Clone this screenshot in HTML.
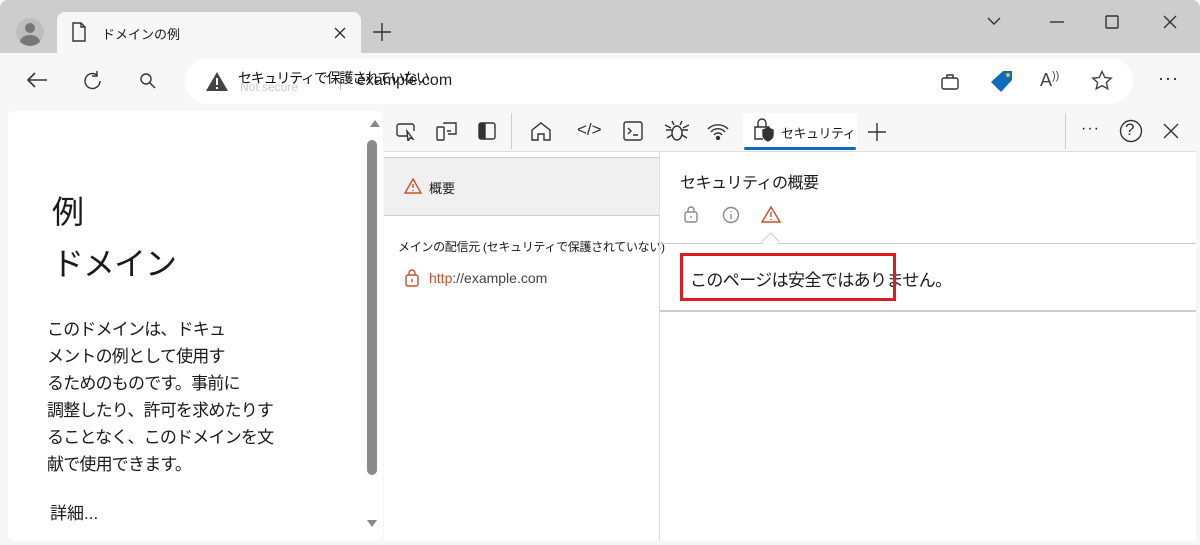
<!DOCTYPE html><html><head><meta charset="utf-8"><style>
*{margin:0;padding:0;box-sizing:border-box}
body{width:1200px;height:545px;overflow:hidden;background:#f7f7f7;font-family:"Liberation Sans","Noto Sans CJK JP",sans-serif;position:relative;color:#1a1a1a}
.a{position:absolute}
svg{position:absolute;fill:none;stroke:#333;stroke-width:1.4}
</style></head><body>
<div class="a" style="left:0;top:0;width:1200px;height:53px;background:#cdcdcd;border-radius:8px 8px 0 0"></div>
<div class="a" style="left:16px;top:18px;width:28px;height:28px;border-radius:50%;background:#bdbdbd;overflow:hidden"><div class="a" style="left:9px;top:5px;width:10px;height:10px;border-radius:50%;background:#777"></div><div class="a" style="left:4px;top:17px;width:20px;height:14px;border-radius:50%;background:#777"></div></div>
<div class="a" style="left:57px;top:12px;width:304px;height:42px;background:#f7f7f7;border-radius:8px 8px 0 0"></div>
<svg style="left:72px;top:22px" width="14" height="20"><path d="M1 1h8l4 4v14H1z M9 1v4h4"/></svg>
<div class="a" style="left:102px;top:24px;font-size:13px">ドメインの例</div>
<svg style="left:334px;top:27px" width="12" height="12"><path d="M1 1l10 10M11 1L1 11"/></svg>
<svg style="left:372px;top:22px" width="20" height="20"><path d="M10 1v18M1 10h18"/></svg>
<svg style="left:987px;top:16px" width="14" height="10"><path d="M1 2l6 6 6-6"/></svg>
<svg style="left:1050px;top:20px" width="14" height="4"><path d="M0 2h14"/></svg>
<svg style="left:1105px;top:15px" width="14" height="14"><rect x="1" y="1" width="12" height="12" rx="1"/></svg>
<svg style="left:1163px;top:15px" width="14" height="14"><path d="M1 1l12 12M13 1L1 13"/></svg>
<svg style="left:26px;top:71px;stroke-width:1.6" width="22" height="18"><path d="M21 9H2M9 2L2 9l7 7"/></svg>
<svg style="left:82px;top:70px" width="22" height="22"><path d="M18 11a7.5 7.5 0 1 1-3-6M15 1v5h-5"/></svg>
<svg style="left:139px;top:72px" width="18" height="18"><circle cx="7" cy="7" r="5"/><path d="M11 11l5 5"/></svg>
<div class="a" style="left:185px;top:58px;width:948px;height:46px;background:#fff;border-radius:23px"></div>
<svg style="left:206px;top:72px;fill:#444;stroke:none" width="22" height="20"><path d="M11 0L22 19H0z"/><rect x="10" y="6" width="2" height="7" fill="#fff"/><rect x="10" y="15" width="2" height="2" fill="#fff"/></svg>
<div class="a" style="left:240px;top:80px;font-size:12px;color:#ccc">Not secure</div>
<div class="a" style="left:340px;top:72px;width:1px;height:18px;background:#bbb"></div>
<div class="a" style="left:357px;top:72px;font-size:16px;color:#222">example.com</div>
<div class="a" style="left:238px;top:68px;font-size:14px;color:#111;letter-spacing:-1.2px">セキュリティで保護されていない</div>
<svg style="left:941px;top:74px" width="18" height="16"><rect x="1" y="4" width="16" height="11" rx="2"/><path d="M6 4V1h6v3"/></svg>
<svg style="left:990px;top:70px;stroke:none;fill:#0f6cbd" width="24" height="24"><path d="M13 1h9v9L11 22 1 12z"/><circle cx="18" cy="5" r="2" fill="#f2c21b"/></svg>
<div class="a" style="left:1040px;top:70px;font-size:18px;color:#444">A<span style="font-size:11px;vertical-align:top">))</span></div>
<svg style="left:1091px;top:70px;stroke:#444" width="22" height="22"><path d="M11 1.5l2.8 6 6.4.7-4.8 4.3 1.4 6.4L11 15.6 5.2 18.9l1.4-6.4L1.8 8.2l6.4-.7z"/></svg>
<div class="a" style="left:1158px;top:68px;font-size:18px;letter-spacing:1px">···</div>
<!-- page -->
<div class="a" style="left:8px;top:111px;width:375px;height:430px;background:#fff;border-radius:6px"></div>
<div class="a" style="left:370px;top:120px;border:5px solid transparent;border-bottom:7px solid #888;border-top:0"></div>
<div class="a" style="left:367px;top:140px;width:10px;height:335px;background:#8a8a8a;border-radius:5px"></div>
<div class="a" style="left:367px;top:520px;border:5px solid transparent;border-top:7px solid #888;border-bottom:0"></div>
<div class="a" style="left:52px;top:186px;font-size:32px;line-height:52px;letter-spacing:-1px">例<br>ドメイン</div>
<div class="a" style="left:47px;top:316px;font-size:17px;line-height:27px;width:260px;letter-spacing:-0.8px">このドメインは、ドキュ<br>メントの例として使用す<br>るためのものです。事前に<br>調整したり、許可を求めたりす<br>ることなく、このドメインを文<br>献で使用できます。</div>
<div class="a" style="left:50px;top:499px;font-size:17px">詳細...</div>
<!-- devtools -->
<div class="a" style="left:384px;top:111px;width:812px;height:430px;background:#fff"></div>
<div class="a" style="left:384px;top:111px;width:812px;height:41px;background:#f7f7f7;border-bottom:1px solid #ddd"></div>
<svg style="left:396px;top:123px" width="20" height="18"><path d="M12 13H3a2 2 0 0 1-2-2V3a2 2 0 0 1 2-2h13a2 2 0 0 1 2 2v5M11 8l6 8-3-1-2 3z"/></svg>
<svg style="left:436px;top:121px" width="22" height="20"><rect x="1" y="6" width="7" height="13" rx="1"/><path d="M8 3V2h12v11h-8M11 10h4"/></svg>
<svg style="left:478px;top:122px" width="18" height="18"><rect x="1" y="1" width="16" height="16" rx="2"/><rect x="2" y="2" width="5" height="14" fill="#333"/></svg>
<div class="a" style="left:511px;top:113px;width:1px;height:36px;background:#ccc"></div>
<svg style="left:530px;top:121px" width="22" height="20"><path d="M2 9L11 2l9 7v10h-6v-6H8v6H2z"/></svg>
<div class="a" style="left:577px;top:120px;font-size:17px;color:#333">&lt;/&gt;</div>
<svg style="left:623px;top:121px" width="20" height="20"><rect x="1" y="1" width="18" height="18" rx="2"/><path d="M5 7l3 3-3 3M10 14h5"/></svg>
<svg style="left:664px;top:119px" width="26" height="24"><ellipse cx="13" cy="14" rx="5" ry="7"/><path d="M10 6l-2-4M16 6l2-4M8 11H2M8 16l-5 3M18 11h6M18 16l5 3M1 6l6 3M25 6l-6 3"/></svg>
<svg style="left:706px;top:122px" width="24" height="18"><path d="M2 7a14 14 0 0 1 20 0M5 10a9 9 0 0 1 14 0M8 13a5 5 0 0 1 8 0"/><circle cx="12" cy="16" r="1.5" fill="#333"/></svg>
<div class="a" style="left:743px;top:113px;width:114px;height:38px;background:#fff"></div>
<svg style="left:752px;top:118px" width="22" height="26"><path d="M11 21H3V9h14v3M6 9V5a4 4 0 0 1 8 0v4"/><path d="M11 12l5-2 5 2v5c0 4-5 6-5 6s-5-2-5-6z" fill="#333"/></svg>
<div class="a" style="left:781px;top:123px;font-size:13px;letter-spacing:-0.5px">セキュリティ</div>
<div class="a" style="left:744px;top:147px;width:112px;height:3px;background:#0f6cbd;border-radius:2px"></div>
<svg style="left:867px;top:122px" width="20" height="20"><path d="M10 1v18M1 10h18"/></svg>
<div class="a" style="left:1065px;top:113px;width:1px;height:36px;background:#ccc"></div>
<div class="a" style="left:1081px;top:120px;font-size:16px;letter-spacing:1px">···</div>
<svg style="left:1119px;top:119px" width="24" height="24"><circle cx="12" cy="12" r="10.5"/></svg>
<div class="a" style="left:1125px;top:120px;font-size:17px;color:#333">?</div>
<svg style="left:1163px;top:123px" width="16" height="16"><path d="M1 1l14 14M15 1L1 15"/></svg>
<div class="a" style="left:384px;top:157px;width:275px;height:59px;background:#f0f0f0;border-top:1px solid #ccc;border-bottom:1px solid #ccc"></div>
<svg style="left:404px;top:178px;stroke:#c8502a" width="18" height="16"><path d="M9 1L17 15H1z M9 6v4M9 12v1"/></svg>
<div class="a" style="left:429px;top:178px;font-size:13px">概要</div>
<div class="a" style="left:398px;top:238px;font-size:12px;letter-spacing:-0.3px">メインの配信元 (セキュリティで保護されていない)</div>
<svg style="left:405px;top:269px;stroke:#c8502a" width="14" height="18"><rect x="1" y="6" width="12" height="11" rx="2"/><path d="M4 6V4a3 3 0 0 1 6 0v2M7 10v3"/></svg>
<div class="a" style="left:429px;top:270px;font-size:14px;color:#c8502a">http<span style="color:#444">://example.com</span></div>
<div class="a" style="left:659px;top:152px;width:1px;height:389px;background:#dde"></div>
<div class="a" style="left:680px;top:169px;font-size:16px;letter-spacing:-0.5px">セキュリティの概要</div>
<svg style="left:684px;top:206px;stroke:#888" width="14" height="18"><rect x="1" y="6" width="12" height="10" rx="2"/><path d="M4 6V4a3 3 0 0 1 6 0v2M7 10v2"/></svg>
<svg style="left:722px;top:206px;stroke:#888" width="18" height="18"><circle cx="9" cy="9" r="7.5"/><path d="M9 8v5M9 5v1"/></svg>
<svg style="left:761px;top:206px;stroke:#c8502a" width="20" height="18"><path d="M10 1L19 16H1z M10 6v5M10 13v1"/></svg>
<div class="a" style="left:660px;top:243px;width:536px;height:1px;background:#ccc"></div>
<div class="a" style="left:764px;top:235px;width:13px;height:13px;background:#fff;border-left:1px solid #ccc;border-top:1px solid #ccc;transform:rotate(45deg)"></div>
<div class="a" style="left:660px;top:310px;width:536px;height:2px;background:#ccc"></div>
<div class="a" style="left:690px;top:266px;font-size:17px;letter-spacing:-0.6px">このページは安全ではありません。</div>
<div class="a" style="left:680px;top:253px;width:216px;height:48px;border:3px solid #e01b22"></div>
</body></html>
